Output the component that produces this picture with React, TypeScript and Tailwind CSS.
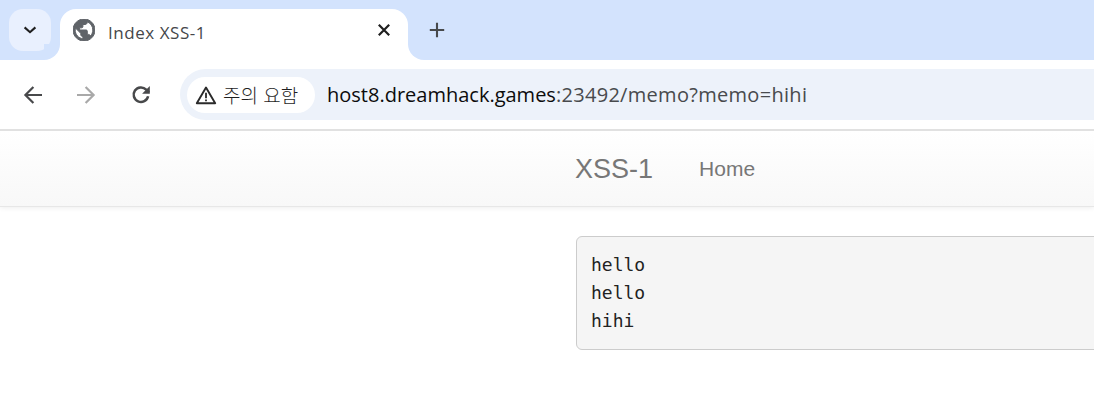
import React from "react";

const ui = "font-['Open_Sans','Noto_Sans_CJK_KR',sans-serif]";

function Corner({ side }: { side: "left" | "right" }) {
  return (
    <div className={side === "left" ? "absolute bottom-0 left-[-16px] w-4 h-4 bg-white" : "absolute bottom-0 right-[-16px] w-4 h-4 bg-white"}>
      <div className={side === "left" ? "w-4 h-4 bg-[#d3e3fd] rounded-br-[16px]" : "w-4 h-4 bg-[#d3e3fd] rounded-bl-[16px]"} />
    </div>
  );
}

export default function App() {
  return (
    <div className="w-[1094px] h-[406px] overflow-hidden bg-white">
      <div className="h-[60px] bg-[#d3e3fd] flex items-start">
        <div className="mt-[9px] ml-[9px] w-[42px] h-[42px] rounded-[14px] bg-[#e9f0fe] flex items-center justify-center">
          <svg width="20" height="20" viewBox="0 0 20 20" fill="none" stroke="#1f1f1f" strokeWidth="2.1"><path d="M4.6 7.4 10 12.2l5.4-4.8" /></svg>
        </div>
        <div className="relative mt-[9px] ml-[9px] w-[348px] h-[51px] bg-white rounded-t-[16px] flex items-start pl-[13px]">
          <Corner side="left" />
          <Corner side="right" />
          <svg className="mt-[10px]" width="22" height="22" viewBox="2 2 20 20">
            <path fillRule="evenodd" fill="#5f6368" stroke="#5f6368" strokeWidth="0.9" d="M12 2C6.48 2 2 6.48 2 12s4.48 10 10 10 10-4.48 10-10S17.52 2 12 2zm-1 17.93c-3.95-.49-7-3.85-7-7.93 0-.62.08-1.21.21-1.79L9 15v1c0 1.1.9 2 2 2v1.93zm6.9-2.54c-.26-.81-1-1.39-1.9-1.39h-1v-3c0-.55-.45-1-1-1H8v-2h2c.55 0 1-.45 1-1V7h2c1.1 0 2-.9 2-2v-.41c2.93 1.19 5 4.06 5 7.41 0 2.08-.8 3.97-2.1 5.39z" />
          </svg>
          <span className={`${ui} ml-[13px] mt-[12px] text-[17px] tracking-[0.55px] leading-[24px] text-[#45474a]`}>Index XSS-1</span>
          <svg className="absolute left-[316px] top-[13px]" width="16" height="16" viewBox="0 0 16 16" stroke="#1f1f1f" strokeWidth="2.2"><path d="M2.8 2.8l10.4 10.4M13.2 2.8 2.8 13.2" /></svg>
        </div>
        <svg className="mt-[21px] ml-[20px]" width="18" height="18" viewBox="0 0 18 18" stroke="#47494c" strokeWidth="2.1"><path d="M9 1.8v14.4M1.8 9h14.4" /></svg>
      </div>
      <div className="h-[71px] bg-white rounded-tl-[16px] border-b-2 border-[#e1e1e1] flex items-center relative">
        <svg className="ml-[23px]" width="20" height="20" viewBox="0 0 20 20" fill="none" stroke="#48494b" strokeWidth="2.2"><path d="M19 10H2.8M10.4 1.9 2.4 10l8 8.1" /></svg>
        <svg className="ml-[33px]" width="20" height="20" viewBox="0 0 20 20" fill="none" stroke="#a9a9a9" strokeWidth="2.2"><path d="M1 10h16.2M9.6 1.9l8 8.1-8 8.1" /></svg>
        <svg className="ml-[35px]" width="20" height="20" viewBox="0 0 20 20" fill="none" stroke="#48494b" strokeWidth="2.5"><path d="M17.1 11.2A7.3 7.3 0 1 1 15.2 4.6L18 7.4" /><path d="M18.8 1v7.7h-7.7" fill="#48494b" stroke="none" /></svg>
        <div className="ml-[29px] w-[914px] h-[51px] rounded-l-[26px] bg-[#edf2fa] flex items-center pl-[7px]">
          <div className="h-[36px] w-[128px] rounded-[18px] bg-white flex items-center pl-[8px]">
            <svg width="22" height="20" viewBox="0 0 22 20"><path d="M11 2.6 20.2 18.2H1.8Z" fill="none" stroke="#2a2a2a" strokeWidth="1.9" strokeLinejoin="round" /><path d="M11 7.8v5.4M11 14.4v1.9" stroke="#2a2a2a" strokeWidth="1.8" /></svg>
            <span className="ml-[6px] text-[19px] [word-spacing:1px] leading-[24px] text-[#1f1f1f] font-['Noto_Sans_CJK_KR',sans-serif] font-light">주의 요함</span>
          </div>
          <div className={`${ui} ml-[12px] text-[20px] leading-[28px] text-[#484a4d] whitespace-nowrap`}>
            <span className="text-[#0c0c0c]">host8.dreamhack.games</span><span className="tracking-[0.3px]">:23492/memo?memo=hihi</span>
          </div>
        </div>
      </div>
      <div className="h-[76px] bg-gradient-to-b from-white to-[#f8f8f8] border-b border-[#e7e7e7] shadow-[0_1px_5px_rgba(0,0,0,0.07)] flex items-center pl-[575px] font-['Liberation_Sans',sans-serif] text-[#777777]">
        <span className="text-[27px] leading-[36px]">XSS-1</span>
        <span className="ml-[46px] text-[21px] leading-[30px]">Home</span>
      </div>
      <pre className="mt-[29px] ml-[576px] w-[600px] h-[114px] bg-[#f5f5f5] border border-[#cccccc] rounded-[6px] px-[14px] py-[14px] font-['DejaVu_Sans_Mono',monospace] text-[18px] leading-[28px] text-[#222222]">{"hello\nhello\nhihi"}</pre>
    </div>
  );
}
